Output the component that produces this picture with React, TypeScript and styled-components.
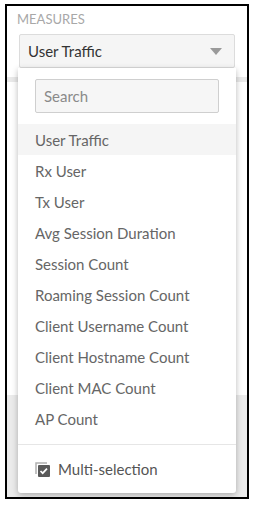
import React from "react";
import styled, { createGlobalStyle } from "styled-components";

const Global = createGlobalStyle`
  body {
    margin: 0;
    background: #fff;
    font-family: "Lato", "Liberation Sans", sans-serif;
  }
`;

const Frame = styled.div`
  position: relative;
  margin: 4px 0 0 5px;
  width: 240px;
  height: 491px;
  border: 2px solid #000;
  background: #fff;
  display: flex;
  flex-direction: column;
  overflow: hidden;
`;

const Label = styled.div`
  padding: 4px 0 0 10px;
  height: 24px;
  font-size: 13px;
  line-height: 18px;
  color: #a8a8a8;
  text-transform: uppercase;
`;

const Select = styled.div`
  margin-left: 12px;
  width: 194px;
  height: 32px;
  border: 1px solid #dcdcdc;
  border-radius: 2px;
  background: #f5f5f5;
  display: flex;
  align-items: center;
  justify-content: space-between;
  padding: 0 12px 0 8px;
  font-size: 15px;
  color: #333;
`;

const Caret = styled.span`
  width: 0;
  height: 0;
  border-left: 6px solid transparent;
  border-right: 6px solid transparent;
  border-top: 7px solid #9a9a9a;
`;

const Band = styled.div`
  margin-top: 9px;
  height: 5px;
  background: #e9e9e9;
`;

const Page = styled.div`
  height: 313px;
  background: #fff;
`;

const Bottom = styled.div`
  flex: 1;
  background: #ebebeb;
`;

const Panel = styled.div`
  position: absolute;
  left: 11px;
  top: 62px;
  width: 218px;
  height: 425px;
  background: #fff;
  border-radius: 0 0 3px 3px;
  box-shadow: 0 2px 6px rgba(0, 0, 0, 0.28);
  display: flex;
  flex-direction: column;
`;

const Search = styled.input`
  margin: 11px 0 0 17px;
  width: 184px;
  height: 34px;
  box-sizing: border-box;
  border: 1px solid #cfcfcf;
  border-radius: 2px;
  background: #f6f6f6;
  padding: 0 8px;
  font-family: "Lato", "Liberation Sans", sans-serif;
  font-size: 15px;
  color: #333;
  outline: none;
  &::placeholder {
    color: #8a8a8a;
  }
`;

const List = styled.div`
  margin-top: 11px;
  display: flex;
  flex-direction: column;
`;

const Item = styled.div<{ $active?: boolean }>`
  height: 31px;
  display: flex;
  align-items: center;
  padding-left: 17px;
  font-size: 15px;
  color: #666;
  background: ${(p) => (p.$active ? "#f5f5f5" : "transparent")};
`;

const Footer = styled.div`
  margin-top: 10px;
  border-top: 1px solid #e6e6e6;
  flex: 1;
  display: flex;
  align-items: center;
  gap: 8px;
  padding-left: 17px;
  font-size: 15px;
  color: #555;
`;

const items = [
  "User Traffic",
  "Rx User",
  "Tx User",
  "Avg Session Duration",
  "Session Count",
  "Roaming Session Count",
  "Client Username Count",
  "Client Hostname Count",
  "Client MAC Count",
  "AP Count",
];

function MultiIcon() {
  return (
    <svg width="15" height="15" viewBox="0 0 15 15">
      <path d="M1 12V1h11" fill="none" stroke="#b0b0b0" strokeWidth="1.5" />
      <rect x="3" y="3" width="12" height="12" rx="1" fill="#5a5a5a" />
      <path d="M5.5 9l2.2 2.2 4.3-4.5" fill="none" stroke="#fff" strokeWidth="1.7" />
    </svg>
  );
}

export default function App() {
  return (
    <>
      <Global />
      <Frame>
        <Label>Measures</Label>
        <Select>
          <span>User Traffic</span>
          <Caret />
        </Select>
        <Band />
        <Page />
        <Bottom />
        <Panel>
          <Search placeholder="Search" />
          <List>
            {items.map((it, i) => (
              <Item key={it} $active={i === 0}>
                {it}
              </Item>
            ))}
          </List>
          <Footer>
            <MultiIcon />
            <span>Multi-selection</span>
          </Footer>
        </Panel>
      </Frame>
    </>
  );
}
